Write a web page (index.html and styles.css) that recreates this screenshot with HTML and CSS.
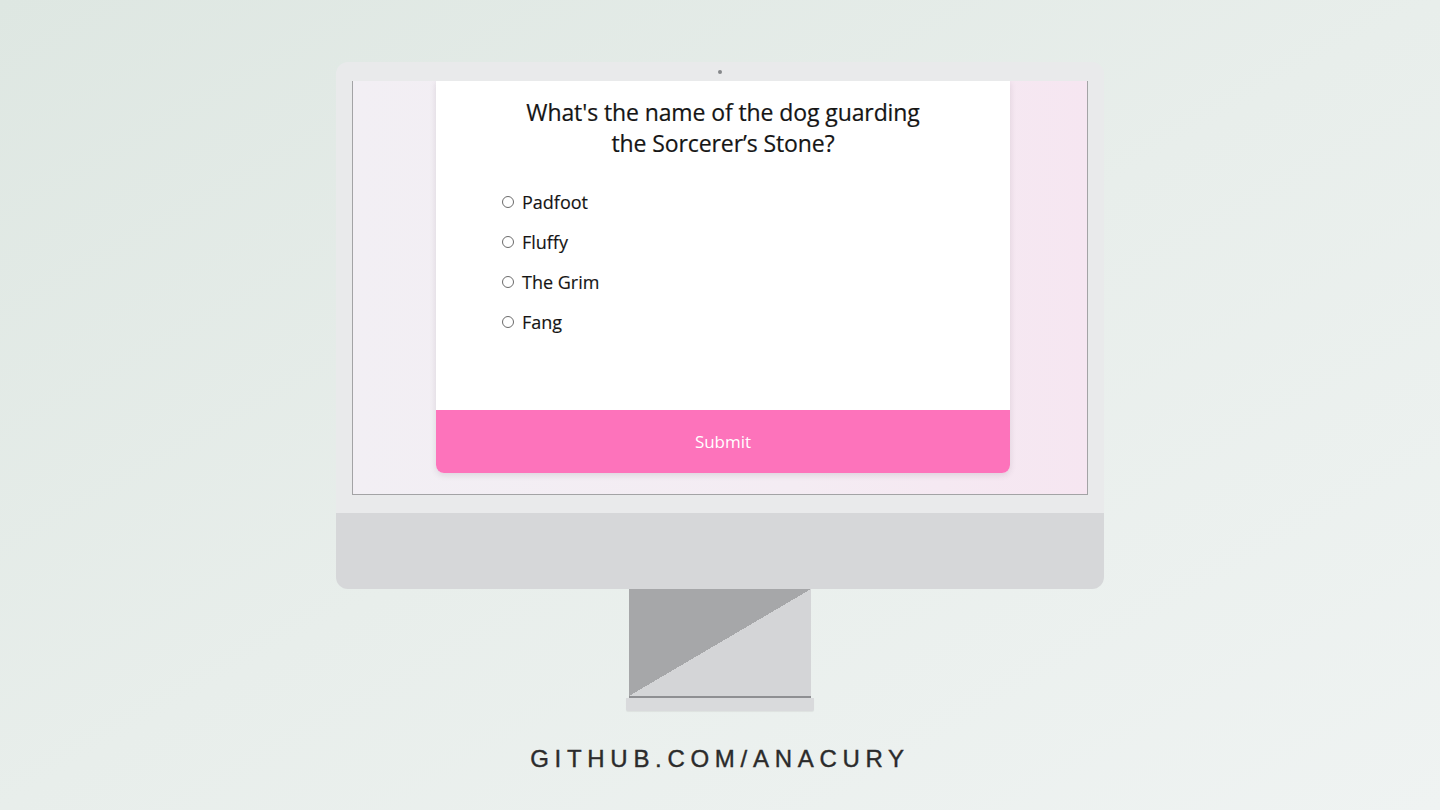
FILE: index.html
```html
<!DOCTYPE html>
<html lang="en">
<head>
<meta charset="utf-8">
<title>Quiz</title>
<link rel="stylesheet" href="styles.css">
</head>
<body>
<div class="page">
  <div class="monitor">
    <div class="bezel">
      <div class="bezel-top"><span class="camera"></span></div>
      <div class="screen">
        <div class="card">
          <h1 class="question">What's the name of the dog guarding<br>the Sorcerer’s Stone?</h1>
          <ul class="options">
            <li class="option"><span class="radio"></span><span>Padfoot</span></li>
            <li class="option"><span class="radio"></span><span>Fluffy</span></li>
            <li class="option"><span class="radio"></span><span>The Grim</span></li>
            <li class="option"><span class="radio"></span><span>Fang</span></li>
          </ul>
          <div class="submit">Submit</div>
        </div>
      </div>
      <div class="bezel-bottom"></div>
    </div>
    <div class="chin"></div>
  </div>
  <div class="stand"></div>
  <div class="stand-line"></div>
  <div class="foot"></div>
  <div class="credit">GITHUB.COM/ANACURY</div>
</div>
</body>
</html>
```
FILE: styles.css
```css
* { box-sizing: border-box; }
html, body { margin: 0; padding: 0; }
body {
  width: 1440px;
  height: 810px;
  overflow: hidden;
  background: linear-gradient(to bottom right, #dee7e2 0%, #e8eeeb 50%, #eff3f2 100%);
  font-family: "Open Sans", "Liberation Sans", sans-serif;
}
.page {
  display: flex;
  flex-direction: column;
  align-items: center;
  padding-top: 62px;
}
.monitor {
  width: 768px;
  display: flex;
  flex-direction: column;
}
.bezel {
  background: #e9eaeb;
  border-radius: 12px 12px 0 0;
  padding: 0 16px;
}
.bezel-top {
  height: 19px;
  display: flex;
  align-items: center;
  justify-content: center;
  padding-top: 1px;
}
.camera {
  width: 4px;
  height: 4px;
  border-radius: 50%;
  background: #85878a;
}
.screen {
  height: 414px;
  border-left: 1px solid #a3a3a5;
  border-right: 1px solid #a3a3a5;
  border-bottom: 1px solid #a3a3a5;
  background: linear-gradient(to right, #f2eff4 0%, #f4ecf3 60%, #f6e6f1 100%);
  overflow: hidden;
  padding-left: 83px;
}
.card {
  width: 574px;
  height: 392px;
  background: #ffffff;
  border-radius: 0 0 8px 8px;
  box-shadow: 0 2px 6px rgba(80, 60, 80, 0.14);
  display: flex;
  flex-direction: column;
}
.question {
  margin: 0;
  padding-top: 16px;
  text-align: center;
  font-size: 23px;
  line-height: 31px;
  font-weight: 400;
  color: #151515;
  letter-spacing: -0.1px;
  -webkit-text-stroke: 0.2px #151515;
}
.options {
  list-style: none;
  margin: 23px 0 0;
  padding: 0 0 0 66px;
}
.option {
  height: 40px;
  display: flex;
  align-items: center;
  gap: 8px;
  font-size: 18px;
  color: #151515;
  -webkit-text-stroke: 0.15px #151515;
}
.radio {
  width: 12px;
  height: 12px;
  border: 1px solid #6b6b6b;
  border-radius: 50%;
  background: #fff;
  flex: none;
}
.submit {
  margin-top: auto;
  height: 63px;
  background: #fd73bb;
  border-radius: 0 0 8px 8px;
  color: #ffffff;
  font-size: 17px;
  display: flex;
  align-items: center;
  justify-content: center;
}
.bezel-bottom {
  height: 18px;
}
.chin {
  height: 76px;
  background: #d6d7d9;
  border-radius: 0 0 12px 12px;
}
.stand {
  width: 182px;
  height: 107px;
  background: linear-gradient(to bottom right, #a6a7a9 50%, #d4d5d7 50%);
}
.stand-line {
  width: 182px;
  height: 2px;
  background: #8e8f92;
}
.foot {
  width: 188px;
  height: 13px;
  background: #d9dadc;
  border-radius: 0 0 2px 2px;
  box-shadow: 0 1px 1px rgba(0, 0, 0, 0.06);
}
.credit {
  margin-top: 36px;
  font-family: "Liberation Sans", "DejaVu Sans", sans-serif;
  font-size: 24px;
  line-height: 24px;
  letter-spacing: 5.7px;
  color: #2b2b2b;
  -webkit-text-stroke: 0.4px #2b2b2b;
}
```
